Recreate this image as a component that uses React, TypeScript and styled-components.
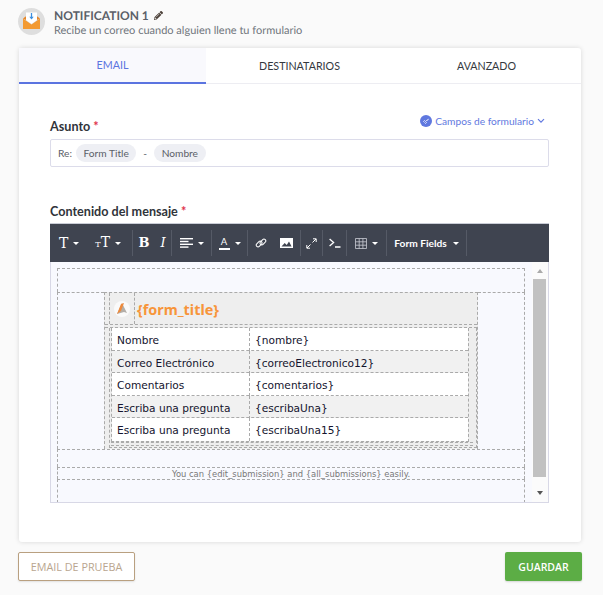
import React from "react";
import styled, { createGlobalStyle } from "styled-components";
import { FaPencilAlt } from "react-icons/fa";

const GlobalStyle = createGlobalStyle`
  html, body { margin: 0; padding: 0; background: #fafafa; }
  body { font-family: Lato, "Open Sans", "Liberation Sans", sans-serif; color: #4a4f57; }
  * { box-sizing: border-box; }
`;

const Page = styled.div`
  width: 603px;
  height: 595px;
  padding: 8px 21px 0 18px;
  overflow: hidden;
`;

const Header = styled.header`
  display: flex;
  align-items: flex-start;
  gap: 9px;
  height: 40px;
`;

const HeaderText = styled.div`
  display: flex;
  flex-direction: column;
  text-rendering: geometricPrecision;
`;

const Title = styled.div`
  display: flex;
  align-items: center;
  gap: 5px;
  font-size: 12px;
  font-weight: 700;
  line-height: 15px;
  color: #5b6068;
  svg { color: #4b4038; }
`;

const Subtitle = styled.div`
  font-size: 11px;
  line-height: 15px;
  color: #70757c;
`;

const Card = styled.section`
  margin-left: 1px;
  width: 562px;
  height: 494px;
  background: #fff;
  border-radius: 3px;
  box-shadow: 0 0 5px rgba(0, 0, 0, 0.14);
`;

const Tabs = styled.nav`
  display: grid;
  grid-template-columns: repeat(3, 187px);
  height: 36px;
  border-bottom: 1px solid #ededf2;
`;

const Tab = styled.div<{ $active?: boolean }>`
  display: flex;
  align-items: center;
  justify-content: center;
  height: 36px;
  padding-bottom: 2px;
  font-size: 10.7px;
  color: ${(p) => (p.$active ? "#5b74e0" : "#34383e")};
  background: ${(p) => (p.$active ? "#f9f9fd" : "transparent")};
  border-bottom: ${(p) => (p.$active ? "2px solid #5b74e0" : "none")};
`;

const Body = styled.div`
  padding: 29px 32px 0 31px;
`;

const LabelRow = styled.div`
  display: flex;
  justify-content: space-between;
  align-items: flex-end;
  height: 26px;
  padding-bottom: 5px;
`;

const Label = styled.label`
  font-size: 12.6px;
  font-weight: 700;
  line-height: 15px;
  color: #30343a;
  em { color: #e0324b; font-style: normal; }
`;

const FieldsLink = styled.div`
  display: flex;
  align-items: center;
  gap: 3px;
  margin-bottom: 6px;
  padding-right: 4px;
  font-size: 10.2px;
  line-height: 14px;
  color: #6279e0;
`;

const SubjectInput = styled.div`
  display: flex;
  align-items: center;
  gap: 4px;
  height: 28px;
  padding-left: 7px;
  font-size: 10.2px;
  color: #5b6068;
  background: #fff;
  border: 1px solid #dcdcea;
  border-radius: 2px;
`;

const Chip = styled.span`
  padding: 0 7.5px;
  line-height: 18px;
  background: #eeeff4;
  border-radius: 9px;
`;

const Dash = styled.span`
  margin: 0 3px;
`;

const MessageLabel = styled(LabelRow)`
  margin-top: 30px;
  height: 26px;
  padding-bottom: 4px;
`;

const Toolbar = styled.div`
  display: flex;
  align-items: center;
  height: 39px;
  padding-left: 7px;
  background: #3f4450;
  border-top: 1px solid #c9ccd6;
  color: #fff;
`;

const ToolGroup = styled.div<{ $width: number }>`
  display: flex;
  align-items: center;
  justify-content: space-around;
  width: ${(p) => p.$width}px;
  height: 26px;
  border-right: 1px solid #555a66;
`;

const HeadingGroup = styled(ToolGroup)`
  justify-content: space-between;
  padding: 0 11px 0 2px;
`;

const Tool = styled.span<{ $serif?: boolean }>`
  display: inline-flex;
  align-items: center;
  gap: 5px;
  font-family: ${(p) => (p.$serif ? '"DejaVu Serif", "Liberation Serif", serif' : "inherit")};
  font-size: 14px;
  line-height: 16px;
`;

const StyleTool = styled(Tool)`
  font-size: 13px;
`;

const SizeGlyph = styled.span`
  display: inline-flex;
  align-items: baseline;
`;

const SmallT = styled.span`
  font-size: 8px;
`;

const Caret = styled.i`
  display: inline-block;
  width: 0;
  height: 0;
  border-left: 3.5px solid transparent;
  border-right: 3.5px solid transparent;
  border-top: 3.5px solid #fff;
`;

const ColorA = styled.span`
  display: inline-block;
  width: 11px;
  padding-bottom: 1px;
  font-size: 9.5px;
  line-height: 11px;
  text-align: center;
  border-bottom: 2px solid #fff;
`;

const FormFields = styled.span`
  display: inline-flex;
  align-items: center;
  gap: 6px;
  font-size: 10.2px;
  font-weight: 700;
`;

const Editor = styled.div`
  display: flex;
  height: 241px;
  background: #fff;
  border: 1px solid #d8d8e6;
  border-top: none;
`;

const Preview = styled.div`
  flex: 1;
  padding: 6px 0 0 6px;
  overflow: hidden;
  background: #f8f9fe;
  font-family: "DejaVu Sans", Verdana, sans-serif;
`;

const Mail = styled.div`
  width: 468px;
`;

const Band = styled.div<{ $height: number }>`
  height: ${(p) => p.$height}px;
  border: 1px dashed #aaa;
  border-bottom: none;
`;

const FooterBand = styled(Band)`
  display: flex;
  align-items: center;
  justify-content: center;
  font-size: 8.4px;
  color: #777;
`;

const Middle = styled.div`
  display: grid;
  grid-template-columns: 47px 374px 47px;
  height: 157px;
`;

const Side = styled.div`
  border: 1px dashed #aaa;
  border-bottom: none;
  border-right: none;
`;

const RightSide = styled(Side)`
  border-right: 1px dashed #aaa;
  border-left: none;
`;

const Center = styled.div`
  background: #eee;
  border: 1px dashed #aaa;
  border-bottom: none;
`;

const TitleBar = styled.div`
  display: flex;
  align-items: center;
  height: 31px;
  margin-left: 4px;
`;

const LogoCell = styled.div`
  display: flex;
  align-items: center;
  justify-content: center;
  width: 26px;
  height: 100%;
  padding-top: 1px;
  border-left: 1px dashed #aaa;
  border-right: 1px dashed #aaa;
`;

const FormTitle = styled.div`
  padding: 2px 0 0 2px;
  font-family: "Noto Sans", sans-serif;
  font-size: 14.4px;
  font-weight: 700;
  color: #f7953a;
`;

const Hatch = styled.div`
  height: 4px;
  border-top: 1px dashed #aaa;
  border-bottom: 1px dashed #aaa;
`;

const FieldsFrame = styled.div`
  height: 120px;
  margin-left: 4px;
  padding: 0 3px 0 1px;
  border-left: 1px dashed #aaa;
  border-right: 1px dashed #aaa;
  border-bottom: 1px dashed #aaa;
`;

const FieldRows = styled.div`
  margin-right: 4px;
  border-left: 1px dashed #aaa;
  border-right: 1px dashed #aaa;
  border-bottom: 1px dashed #aaa;
`;

const FieldRow = styled.div<{ $shaded?: boolean }>`
  display: grid;
  grid-template-columns: 137px 1fr;
  height: 22.5px;
  font-size: 10.6px;
  line-height: 22px;
  color: #14142e;
  background: ${(p) => (p.$shaded ? "#f1f1f1" : "#fff")};
  border-bottom: 1px dashed #aaa;
  &:last-child { border-bottom: none; }
`;

const FieldCell = styled.div`
  padding: 1px 0 0 5px;
  & + & { border-left: 1px dashed #aaa; }
`;

const Scrollbar = styled.div`
  display: flex;
  flex-direction: column;
  align-items: center;
  width: 16px;
  padding: 7px 2px 7px 1px;
  background: #fbfbfb;
`;

const Thumb = styled.div`
  width: 13px;
  height: 198px;
  margin: 6px 0 auto;
  background: #c1c1c1;
`;

const Arrow = styled.i<{ $down?: boolean }>`
  width: 0;
  height: 0;
  border-left: 3.5px solid transparent;
  border-right: 3.5px solid transparent;
  ${(p) => (p.$down ? "border-top: 4px solid #555;" : "border-bottom: 4px solid #aaa;")}
`;

const Actions = styled.footer`
  display: flex;
  justify-content: space-between;
  margin-top: 10px;
`;

const TestButton = styled.button`
  width: 117px;
  height: 29px;
  padding: 0;
  font: 10.8px "Open Sans", sans-serif;
  color: #b9a68f;
  background: #fff;
  border: 1px solid #b9a080;
  border-radius: 2px;
  box-shadow: 0 1px 2px rgba(0, 0, 0, 0.1);
`;

const SaveButton = styled.button`
  width: 77px;
  height: 29px;
  padding: 0;
  font: 600 10.5px "Open Sans", sans-serif;
  color: #fff;
  background: #5cad45;
  border: none;
  border-radius: 2px;
  box-shadow: 0 1px 2px rgba(0, 0, 0, 0.15);
`;

const MailBadge = () => (
  <svg width="27" height="27" viewBox="0 0 27 27">
    <circle cx="13.5" cy="13.5" r="13.5" fill="#dedede" />
    <path d="M8 12V4.5h11V12l-5.5 4z" fill="#fff" />
    <path d="M5 10.5l3-2.2V12zM22 10.5l-3-2.2V12z" fill="#e8872a" />
    <path d="M5 10.5v10.5h17V10.5l-8.5 6z" fill="#f39a32" />
    <path d="M13.5 5v5.5" stroke="#3d8fe0" strokeWidth="1.3" />
    <path d="M11.3 8.8h4.4l-2.2 2.6z" fill="#3d8fe0" />
  </svg>
);

const LinkBadge = () => (
  <svg width="12" height="12" viewBox="0 0 12 12">
    <circle cx="6" cy="6" r="6" fill="#5f78df" />
    <path d="M4.6 7.4l2.8-2.8M3.4 6.6l1.2-1.2M7.4 5.4l1.2-1.2M5.4 8.6l1.2-1.2" stroke="#cfd7f7" strokeWidth="1" strokeLinecap="round" />
  </svg>
);

const Chevron = () => (
  <svg width="8" height="6" viewBox="0 0 8 6">
    <path d="M1 1.2l3 3 3-3" fill="none" stroke="#6279e0" strokeWidth="1.2" />
  </svg>
);

const AlignIcon = () => (
  <svg width="13" height="10" viewBox="0 0 13 10" fill="#fff">
    <rect width="13" height="1.4" />
    <rect y="2.8" width="8.5" height="1.4" />
    <rect y="5.6" width="13" height="1.4" />
    <rect y="8.4" width="8.5" height="1.4" />
  </svg>
);

const LinkIcon = () => (
  <svg width="12" height="12" viewBox="0 0 12 12" fill="none" stroke="#fff" strokeWidth="1">
    <rect x="0.8" y="5.2" width="6.6" height="3.6" rx="1.8" transform="rotate(-45 4.1 7)" />
    <rect x="4.6" y="3.2" width="6.6" height="3.6" rx="1.8" transform="rotate(-45 7.9 5)" />
  </svg>
);

const ImageIcon = () => (
  <svg width="13" height="10" viewBox="0 0 13 10">
    <path d="M0 0h13v10H0z" fill="#fff" />
    <path d="M1.5 8.5l3.2-3.4 2 1.8L9 3.6l2.6 4.9z" fill="#3f4450" />
  </svg>
);

const ExpandIcon = () => (
  <svg width="11" height="11" viewBox="0 0 11 11" fill="none" stroke="#fff" strokeWidth="1">
    <path d="M6.5 4.5L10 1M7 .8h3.2V4M4.5 6.5L1 10M4 10.2H.8V7" />
  </svg>
);

const TerminalIcon = () => (
  <svg width="12" height="10" viewBox="0 0 12 10" fill="none" stroke="#fff" strokeWidth="1.3">
    <path d="M.6 1l4 3.5-4 3.5M6 9h5.5" />
  </svg>
);

const TableIcon = () => (
  <svg width="12" height="11" viewBox="0 0 12 11" fill="none" stroke="#c9ccd4" strokeWidth="0.8">
    <path d="M.5.5h11v10H.5zM4.2.5v10M7.9.5v10M.5 3.8h11M.5 7.2h11" />
  </svg>
);

const PenLogo = () => (
  <svg width="16" height="16" viewBox="0 0 16 16">
    <circle cx="8" cy="8" r="8" fill="#fafafa" />
    <path d="M3 13L8 2l5 10-3-1z" fill="#b3aea8" />
    <path d="M3 13L7 3l3-1-3 8z" fill="#ee8a3c" />
  </svg>
);

const fields = [
  ["Nombre", "{nombre}"],
  ["Correo Electrónico", "{correoElectronico12}"],
  ["Comentarios", "{comentarios}"],
  ["Escriba una pregunta", "{escribaUna}"],
  ["Escriba una pregunta", "{escribaUna15}"],
];

export default function App() {
  return (
    <Page>
      <GlobalStyle />
      <Header>
        <MailBadge />
        <HeaderText>
          <Title>
            NOTIFICATION 1 <FaPencilAlt size={9} />
          </Title>
          <Subtitle>Recibe un correo cuando alguien llene tu formulario</Subtitle>
        </HeaderText>
      </Header>
      <Card>
        <Tabs>
          <Tab $active>EMAIL</Tab>
          <Tab>DESTINATARIOS</Tab>
          <Tab>AVANZADO</Tab>
        </Tabs>
        <Body>
          <LabelRow>
            <Label>
              Asunto <em>*</em>
            </Label>
            <FieldsLink>
              <LinkBadge /> Campos de formulario <Chevron />
            </FieldsLink>
          </LabelRow>
          <SubjectInput>
            Re: <Chip>Form Title</Chip>
            <Dash>-</Dash>
            <Chip>Nombre</Chip>
          </SubjectInput>
          <MessageLabel>
            <Label>
              Contenido del mensaje <em>*</em>
            </Label>
          </MessageLabel>
          <Toolbar>
            <HeadingGroup $width={76}>
              <Tool $serif>
                T <Caret />
              </Tool>
              <Tool $serif>
                <SizeGlyph>
                  <SmallT>T</SmallT>T
                </SizeGlyph>
                <Caret />
              </Tool>
            </HeadingGroup>
            <ToolGroup $width={39}>
              <StyleTool $serif>
                <b>B</b>
              </StyleTool>
              <StyleTool $serif>
                <i>I</i>
              </StyleTool>
            </ToolGroup>
            <ToolGroup $width={40}>
              <Tool>
                <AlignIcon /> <Caret />
              </Tool>
            </ToolGroup>
            <ToolGroup $width={36}>
              <Tool>
                <ColorA>A</ColorA> <Caret />
              </Tool>
            </ToolGroup>
            <ToolGroup $width={53}>
              <LinkIcon />
              <ImageIcon />
            </ToolGroup>
            <ToolGroup $width={22}>
              <ExpandIcon />
            </ToolGroup>
            <ToolGroup $width={24}>
              <TerminalIcon />
            </ToolGroup>
            <ToolGroup $width={40}>
              <Tool>
                <TableIcon /> <Caret />
              </Tool>
            </ToolGroup>
            <ToolGroup $width={80}>
              <FormFields>
                Form Fields <Caret />
              </FormFields>
            </ToolGroup>
          </Toolbar>
          <Editor>
            <Preview>
              <Mail>
                <Band $height={24} />
                <Middle>
                  <Side />
                  <Center>
                    <TitleBar>
                      <LogoCell>
                        <PenLogo />
                      </LogoCell>
                      <FormTitle>{"{form_title}"}</FormTitle>
                    </TitleBar>
                    <Hatch />
                    <FieldsFrame>
                      <FieldRows>
                        {fields.map(([name, tag], i) => (
                          <FieldRow key={i} $shaded={i % 2 === 1}>
                            <FieldCell>{name}</FieldCell>
                            <FieldCell>{tag}</FieldCell>
                          </FieldRow>
                        ))}
                      </FieldRows>
                      <Hatch />
                    </FieldsFrame>
                  </Center>
                  <RightSide />
                </Middle>
                <Band $height={18} />
                <FooterBand $height={12}>
                  You can {"{edit_submission}"} and {"{all_submissions}"} easily.
                </FooterBand>
                <Band $height={24} />
              </Mail>
            </Preview>
            <Scrollbar>
              <Arrow />
              <Thumb />
              <Arrow $down />
            </Scrollbar>
          </Editor>
        </Body>
      </Card>
      <Actions>
        <TestButton>EMAIL DE PRUEBA</TestButton>
        <SaveButton>GUARDAR</SaveButton>
      </Actions>
    </Page>
  );
}
